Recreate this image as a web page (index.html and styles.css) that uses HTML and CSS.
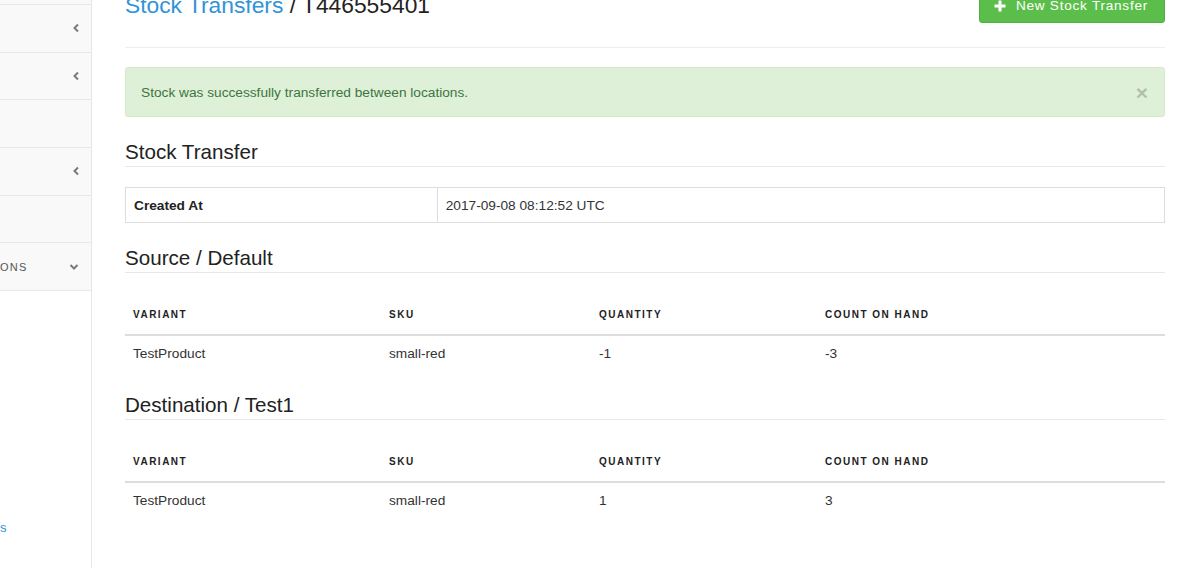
FILE: index.html
```html
<!DOCTYPE html>
<html lang="en">
<head>
<meta charset="utf-8">
<title>Stock Transfers / T446555401</title>
<link rel="stylesheet" href="styles.css">
</head>
<body>
<div class="layout">
  <aside class="sidebar">
    <div class="nav-item nav-item--top"></div>
    <div class="nav-item"><svg class="chev" viewBox="0 0 6 10" width="6" height="10"><polyline points="5,1.5 1.5,5 5,8.5"/></svg></div>
    <div class="nav-item"><svg class="chev" viewBox="0 0 6 10" width="6" height="10"><polyline points="5,1.5 1.5,5 5,8.5"/></svg></div>
    <div class="nav-item"></div>
    <div class="nav-item"><svg class="chev" viewBox="0 0 6 10" width="6" height="10"><polyline points="5,1.5 1.5,5 5,8.5"/></svg></div>
    <div class="nav-item"></div>
    <div class="nav-item"><span class="nav-label">ONS</span><svg class="chev" viewBox="0 0 10 6" width="10" height="6"><polyline points="1.5,1 5,4.5 8.5,1"/></svg></div>
    <div class="sidebar-rest"><a class="side-link" href="#">s</a></div>
  </aside>
  <main class="content">
    <header class="page-header">
      <h1 class="page-title"><a href="#">Stock Transfers</a> / T446555401</h1>
      <a class="btn-success" href="#"><svg class="plus" viewBox="0 0 12 12" width="12" height="12"><path d="M6 0.5v11M0.5 6h11"/></svg>New Stock Transfer</a>
    </header>
    <div class="alert"><span>Stock was successfully transferred between locations.</span><span class="close">&times;</span></div>

    <h2 class="section-title">Stock Transfer</h2>
    <table class="table table-bordered">
      <colgroup><col class="col-label"><col></colgroup>
      <tr><th class="cell-label">Created At</th><td>2017-09-08 08:12:52 UTC</td></tr>
    </table>

    <h2 class="section-title">Source / Default</h2>
    <table class="table">
      <colgroup><col class="col-variant"><col class="col-sku"><col class="col-qty"><col></colgroup>
      <thead><tr><th>Variant</th><th>SKU</th><th>Quantity</th><th>Count On Hand</th></tr></thead>
      <tbody><tr><td>TestProduct</td><td>small-red</td><td>-1</td><td>-3</td></tr></tbody>
    </table>

    <h2 class="section-title">Destination / Test1</h2>
    <table class="table">
      <colgroup><col class="col-variant"><col class="col-sku"><col class="col-qty"><col></colgroup>
      <thead><tr><th>Variant</th><th>SKU</th><th>Quantity</th><th>Count On Hand</th></tr></thead>
      <tbody><tr><td>TestProduct</td><td>small-red</td><td>1</td><td>3</td></tr></tbody>
    </table>
  </main>
</div>
</body>
</html>
```
FILE: styles.css
```css
html, body {
  margin: 0;
  padding: 0;
  background: #fff;
}
body {
  font-family: "Liberation Sans", Arial, Helvetica, sans-serif;
  font-size: 13.7px;
  color: #333;
}
.layout {
  display: flex;
  height: 568px;
  overflow: hidden;
}
.sidebar {
  width: 92px;
  flex: none;
  box-sizing: border-box;
  border-right: 1px solid #e6e6e6;
  display: flex;
  flex-direction: column;
  background: #fff;
}
.nav-item {
  height: 47.67px;
  flex: none;
  box-sizing: border-box;
  border-bottom: 1px solid #e8e8e8;
  background: #f9f9f9;
  display: flex;
  align-items: center;
  justify-content: flex-end;
  padding-right: 12px;
}
.nav-item--top {
  height: 5px;
}
.chev {
  fill: none;
  stroke: #7a7a7a;
  stroke-width: 2;
}
.nav-label {
  margin-right: auto;
  font-size: 11px;
  letter-spacing: 1.2px;
  color: #555;
}
.sidebar-rest {
  padding-top: 229px;
}
.side-link {
  font-size: 13px;
  color: #3293d6;
  text-decoration: none;
}
.content {
  flex: 1;
  padding: 0 35px 0 33px;
  margin-top: -13px;
}
.page-header {
  display: flex;
  align-items: center;
  justify-content: space-between;
  padding-bottom: 24px;
  border-bottom: 1px solid #eee;
}
.page-title {
  margin: 0;
  font-size: 22.8px;
  font-weight: 400;
  line-height: 1.1;
  color: #222;
  position: relative;
  top: 1px;
}
.page-title a {
  color: #3293d6;
  text-decoration: none;
}
.btn-success {
  display: flex;
  align-items: center;
  gap: 10px;
  background: #5cbe4a;
  border: 1px solid #50b03f;
  border-radius: 3px;
  padding: 8px 16px 6px 14px;
  line-height: 20px;
  font-size: 13.6px;
  letter-spacing: 0.75px;
  color: #fff;
  text-decoration: none;
}
.plus {
  fill: none;
  stroke: #fff;
  stroke-width: 3;
}
.alert {
  margin-top: 19px;
  display: flex;
  justify-content: space-between;
  align-items: center;
  padding: 16px 15px 14px;
  line-height: 18px;
  background: #dff0d8;
  border: 1px solid #d6e9c6;
  border-radius: 3px;
  color: #3c763d;
}
.close {
  font-size: 21px;
  font-weight: bold;
  line-height: 18px;
  color: #000;
  opacity: 0.2;
  margin-right: 1px;
}
.section-title {
  margin: 23px 0 20px;
  font-size: 20.6px;
  font-weight: 400;
  line-height: 23px;
  padding-bottom: 3px;
  border-bottom: 1px solid #e8e8e8;
  color: #222;
}
.table {
  width: 100%;
  border-collapse: collapse;
  table-layout: fixed;
  line-height: 18px;
}
.table td, .table th {
  padding: 9px 8px 7px;
  text-align: left;
  vertical-align: middle;
}
.table thead th {
  padding: 13px 8px 10px;
  font-size: 10px;
  font-weight: bold;
  letter-spacing: 1.5px;
  text-transform: uppercase;
  color: #222;
  border-bottom: 2px solid #ddd;
}
.table-bordered {
  border: 1px solid #ddd;
}
.table-bordered td, .table-bordered th {
  border: 1px solid #ddd;
}
.table .cell-label {
  font-weight: bold;
  color: #222;
}
.col-label { width: 30%; }
.col-variant { width: 256px; }
.col-sku { width: 210px; }
.col-qty { width: 226px; }
```
